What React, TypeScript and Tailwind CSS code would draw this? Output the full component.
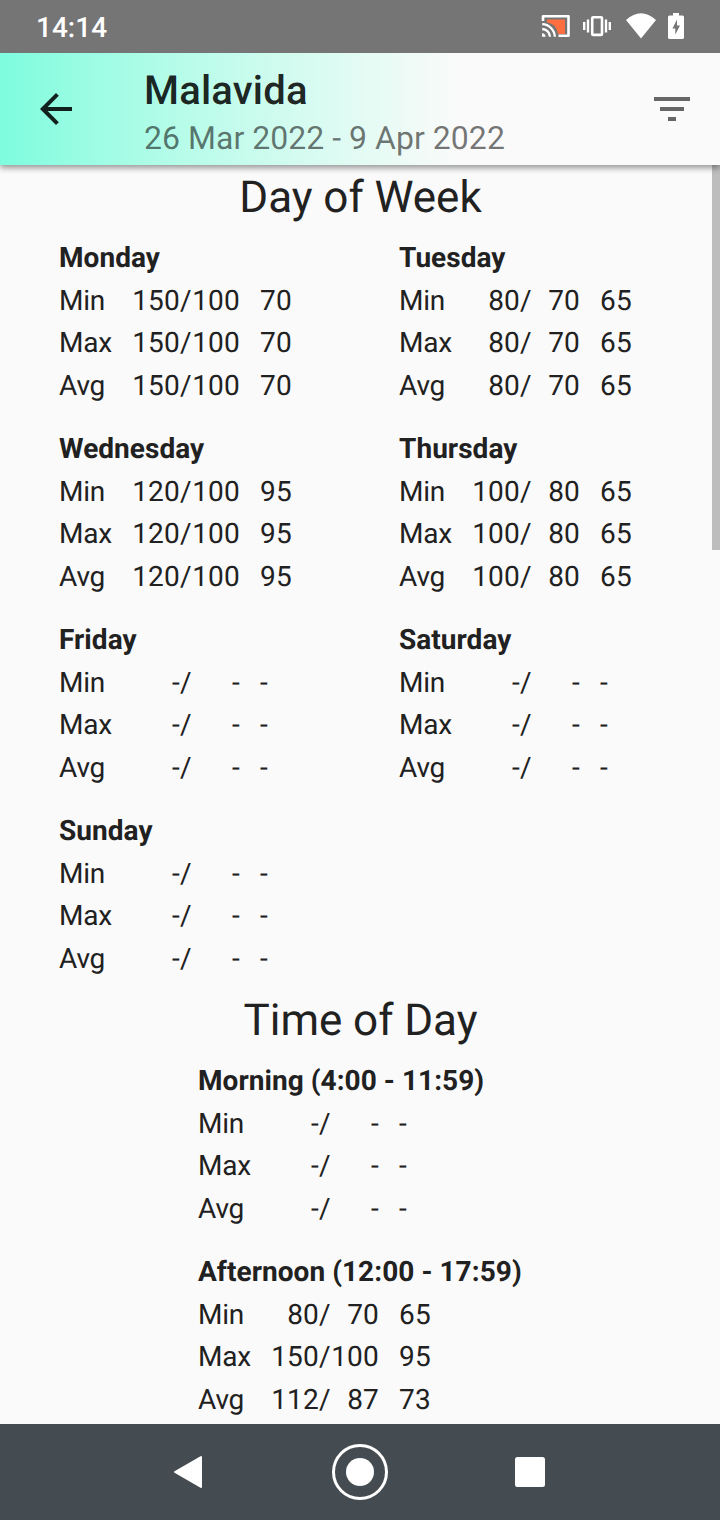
type Reading = { label: string; sys: string; dia: string; pulse: string };
type Group = { title: string; rows: Reading[] };

const group = (title: string, ...values: [string, string, string][]): Group => ({
  title,
  rows: ["Min", "Max", "Avg"].map((label, i) => {
    const [sys, dia, pulse] = values[i] ?? values[0] ?? ["-", "-", "-"];
    return { label, sys, dia, pulse };
  }),
});

const days: Group[] = [
  group("Monday", ["150", "100", "70"]),
  group("Tuesday", ["80", "70", "65"]),
  group("Wednesday", ["120", "100", "95"]),
  group("Thursday", ["100", "80", "65"]),
  group("Friday"),
  group("Saturday"),
  group("Sunday"),
];

const times: Group[] = [
  group("Morning (4:00 - 11:59)"),
  group("Afternoon (12:00 - 17:59)", ["80", "70", "65"], ["150", "100", "95"], ["112", "87", "73"]),
];

function ReadingBlock({ title, rows }: Group) {
  return (
    <section className="h-[191px] text-[28px] leading-[42px] tracking-[0.2px] whitespace-pre">
      <h3 className="h-[43px] font-bold tracking-[0.05px]">{title}</h3>
      <div className="grid grid-cols-[121px_60px_20px_auto] grid-rows-[42px_43px_42px]">
        {rows.map((r) => (
          <div key={r.label} className="contents">
            <span className="flex justify-between">
              <span className="tracking-[-0.2px]">{r.label}</span>
              <span>{r.sys}</span>
            </span>
            <span className="flex justify-between">
              <span>/</span>
              <span>{r.dia}</span>
            </span>
            <span />
            <span>{r.pulse}</span>
          </div>
        ))}
      </div>
    </section>
  );
}

function StatusBar() {
  return (
    <div className="relative z-20 flex h-[53px] shrink-0 items-center justify-between bg-[#757575] pl-9 text-white">
      <span className="pt-0.5 text-[28px] leading-8 font-medium">14:14</span>
      <svg width="190" height="53" viewBox="0 0 190 53" fill="none">
        <path d="M17 19.5H35V34H28C27 27 23 23.5 17 22.5Z" fill="#ff6e40" />
        <path d="M13 21V16.2H38.5V35.8H28.5" stroke="#fff" strokeWidth="2.6" strokeLinejoin="round" />
        <path d="M12.2 24.2A13 13 0 0 1 24.8 36.8M12.2 29A8 8 0 0 1 20 36.8" stroke="#fff" strokeWidth="2.3" />
        <path d="M12 33.2A4 4 0 0 1 15.7 36.8H12Z" fill="#fff" />
        <rect x="62.2" y="17.3" width="9.8" height="17.6" rx="1" stroke="#fff" strokeWidth="2.6" />
        <path d="M58 19.5V32.5M54.2 22V30M76 19.5V32.5M79.8 22V30" stroke="#fff" strokeWidth="2.4" />
        <path d="M96 20Q111 6.5 126 20L111 38.5Z" fill="#fff" />
        <path d="M143 13H149V15.5H152.5Q154 15.5 154 17V37.5Q154 39 152.5 39H139.500Q138 39 138 37.500V17Q138 15.500 139.500 15.500H143Z" fill="#fff" />
        <path d="M147 19.500L142.500 28.500H145.300V34.500L150 25.500H147Z" fill="#757575" />
      </svg>
    </div>
  );
}

function AppBar() {
  return (
    <header className="relative z-10 flex h-28 shrink-0 items-center bg-linear-to-r from-[#7dfcde] from-0% to-[#fafafa] to-[64%] shadow-[0_3px_6px_rgba(0,0,0,0.4)]">
      <svg className="ml-8 shrink-0" width="48" height="48" viewBox="0 0 24 24" fill="rgba(0,0,0,0.87)">
        <path d="M20 11H7.830l5.590-5.590L12 4l-8 8 8 8 1.410-1.410L7.830 13H20v-2z" />
      </svg>
      <div className="ml-16 flex-1 whitespace-nowrap">
        <h1 className="mt-[9px] text-[40px] leading-[50px] font-medium tracking-[0.2px] text-black/87">Malavida</h1>
        <p className="mt-[-1px] text-[32px] leading-[46px] tracking-[0.03px] text-black/54">26 Mar 2022 - 9 Apr 2022</p>
      </div>
      <svg className="mr-6 shrink-0" width="48" height="48" viewBox="0 0 24 24" fill="#666">
        <path d="M10 18h4v-2h-4v2zM3 6v2h18V6H3zm3 7h12v-2H6v2z" />
      </svg>
    </header>
  );
}

function NavigationBar() {
  return (
    <nav className="flex h-24 shrink-0 items-center justify-center bg-[#444c51]">
      <svg width="440" height="96" viewBox="0 0 440 96" fill="#fff">
        <path d="M35 48L61 33V63Z" stroke="#fff" strokeWidth="2" strokeLinejoin="round" />
        <circle cx="220" cy="48" r="14" />
        <circle cx="220" cy="48" r="26.500" fill="none" stroke="#fff" strokeWidth="3" />
        <rect x="375" y="33" width="30" height="30" rx="2.500" />
      </svg>
    </nav>
  );
}

export default function App() {
  return (
    <div className="flex h-[1520px] w-[720px] flex-col overflow-hidden bg-[#fafafa] font-['Roboto',sans-serif] text-[#212121] [text-rendering:geometricPrecision]">
      <StatusBar />
      <AppBar />
      <main className="relative flex-1 overflow-hidden">
        <h2 className="h-[72px] pl-px text-center text-[44px] leading-[64px] tracking-[-0.05px]">Day of Week</h2>
        <div className="grid grid-cols-[340px_1fr] pl-[59px]">
          {days.map((d) => (
            <ReadingBlock key={d.title} {...d} />
          ))}
        </div>
        <h2 className="mt-[-13px] h-[72px] pl-px text-center text-[44px] leading-[64px] tracking-[-0.05px]">Time of Day</h2>
        <div className="pl-[198px]">
          {times.map((t) => (
            <ReadingBlock key={t.title} {...t} />
          ))}
        </div>
        <div className="absolute top-0 right-0 h-[385px] w-2 bg-[#bdbdbd]" />
      </main>
      <NavigationBar />
    </div>
  );
}
